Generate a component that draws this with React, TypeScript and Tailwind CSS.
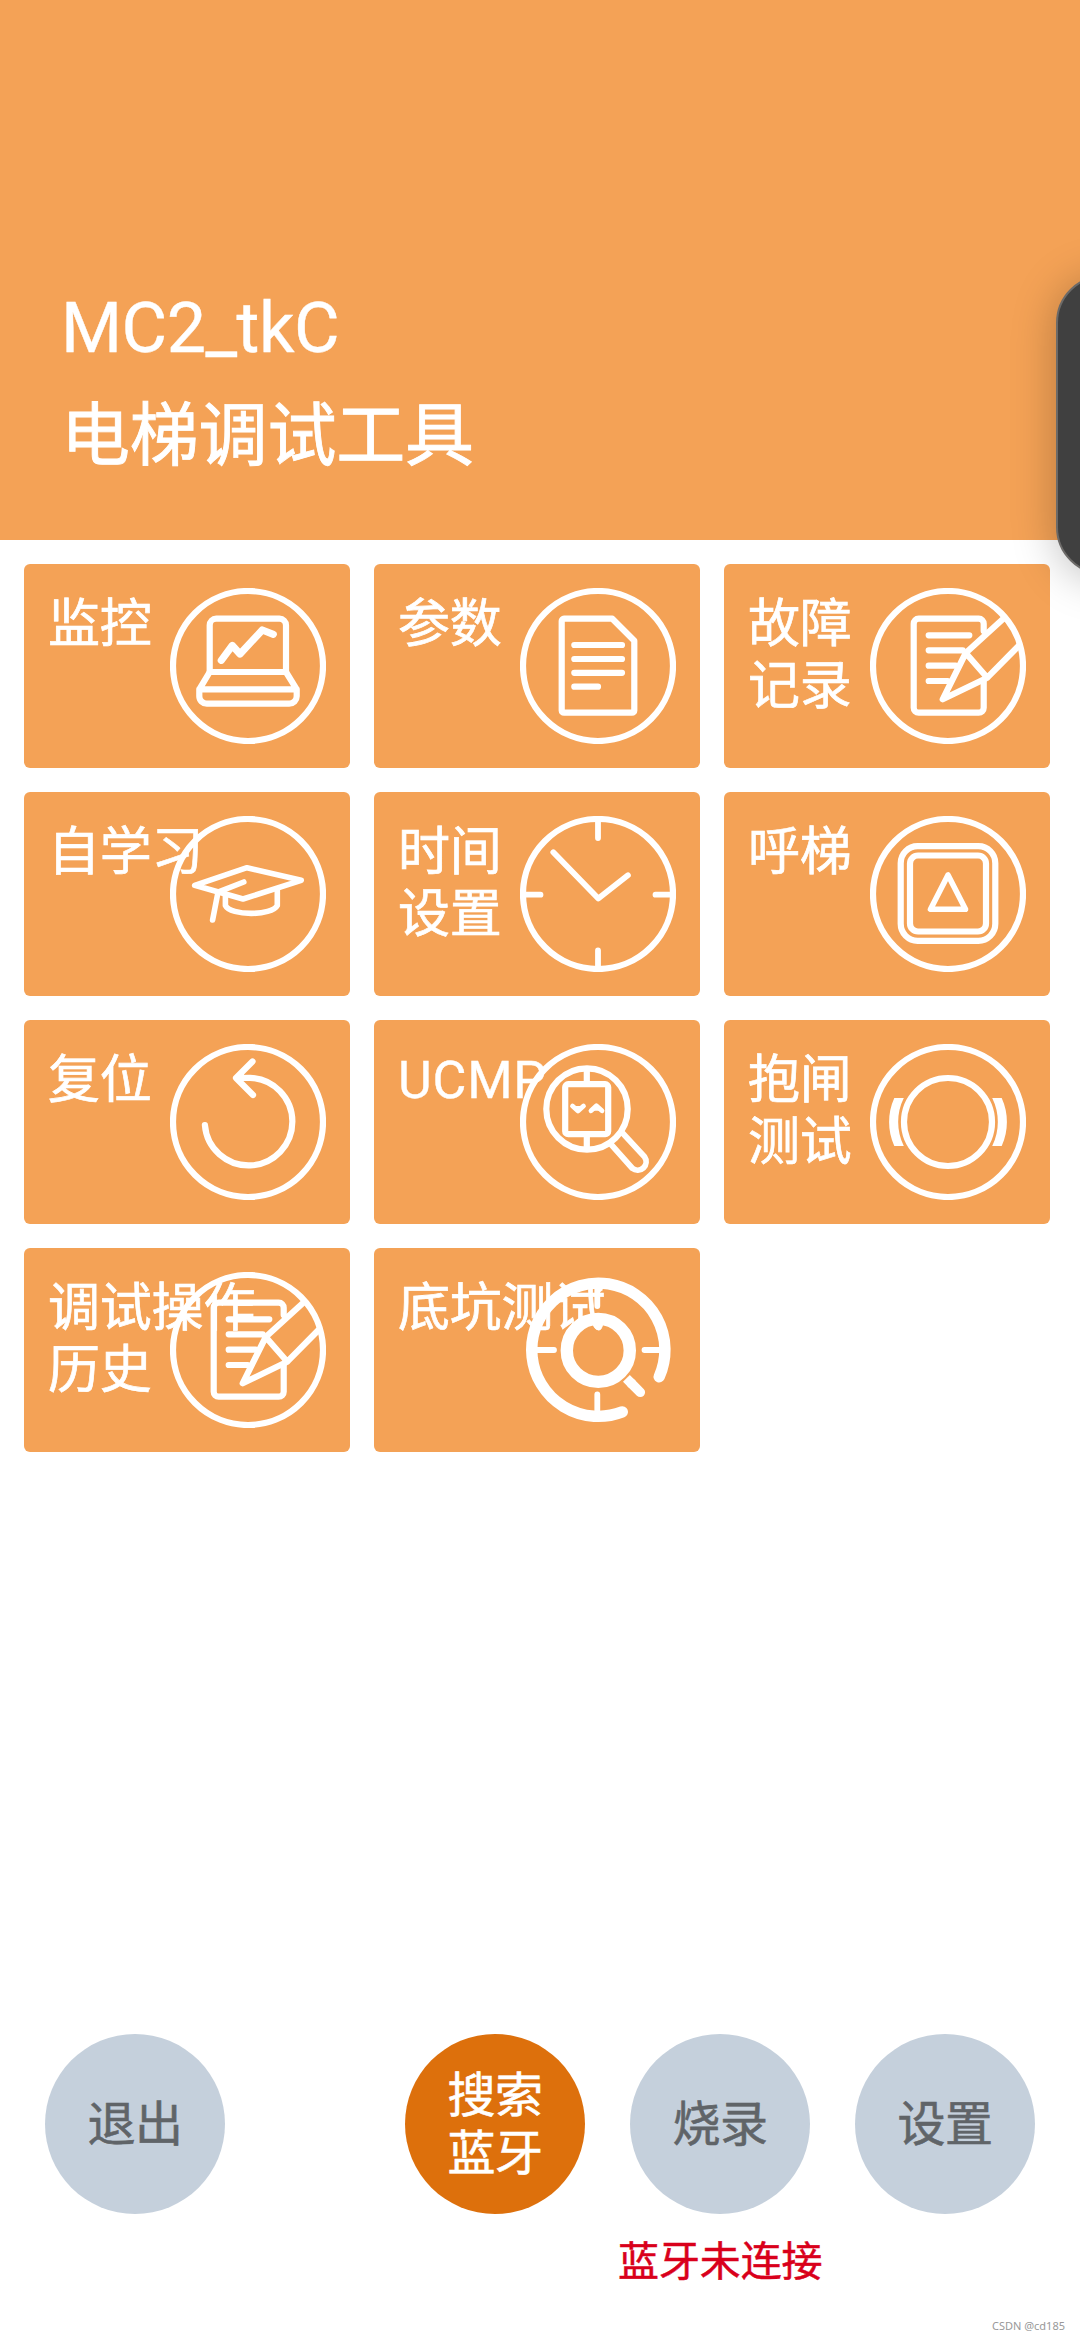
import type { ReactNode } from "react";
import { clsx } from "clsx";

interface MenuItem {
    id: string;
    lines: string[];
    icon: ReactNode;
    latin?: boolean;
}

function RoundIcon({ children }: { children: ReactNode }) {
    return (
        <>
            <circle cx="78" cy="78" r="75" />
            {children}
        </>
    );
}

const noteIcon = (
    <RoundIcon>
        <path d="M113.7 43V35.7a5 5 0 0 0-5-5h-60a5 5 0 0 0-5 5v84a5 5 0 0 0 5 5h60a5 5 0 0 0 5-5V93" />
        <path d="M58.7 47.3h40.6M58.7 62.3h34M58.7 77.7h27M58.7 93h19" />
        <path d="M133 31 95.7 65 72.7 111.3 117.3 89.7 149 57.5M95.7 65l21.6 24.7" />
    </RoundIcon>
);

const menuItems: MenuItem[] = [
    {
        id: "monitor",
        lines: ["监控"],
        icon: (
            <RoundIcon>
                <path d="M39.7 84V37.2a6.5 6.5 0 0 1 6.5-6.5h63.3a6.5 6.5 0 0 1 6.5 6.5V84z" />
                <path d="M39.7 84 29.3 101.3v6.9a7.5 7.5 0 0 0 7.5 7.5h82.4a7.5 7.5 0 0 0 7.5-7.5v-6.9L116 84M29.3 101.3h97.4" />
                <path strokeWidth="7.2" d="M51.3 72.3 62.3 57.5 70 66 92.3 42l11 4.3" />
            </RoundIcon>
        ),
    },
    {
        id: "params",
        lines: ["参数"],
        icon: (
            <RoundIcon>
                <path d="M44 30.7h48.3l22 22V122.4a2.3 2.3 0 0 1-2.3 2.3H44a2.3 2.3 0 0 1-2.3-2.3V33a2.3 2.3 0 0 1 2.3-2.3z" />
                <path d="M54.3 57H102M54.3 71H102M54.3 84.8H102M54.3 98.7H78" />
            </RoundIcon>
        ),
    },
    { id: "faults", lines: ["故障", "记录"], icon: noteIcon },
    {
        id: "learning",
        lines: ["自学习"],
        icon: (
            <RoundIcon>
                <path strokeWidth="5.6" d="m77 51.7 54.2 12.6L73 83 24.7 69.3z" />
                <path strokeWidth="5.6" d="M73.8 66 48 76.2 42.6 104" />
                <path strokeWidth="5.6" d="M55.4 78v11.5c5 10.5 46.5 10.5 51.9 0V74" />
            </RoundIcon>
        ),
    },
    {
        id: "clock",
        lines: ["时间", "设置"],
        icon: (
            <RoundIcon>
                <path strokeWidth="5.8" d="M78 3v19M78 153v-18.5M3 78.7h17.5M153 78.7h-17.5" />
                <path strokeWidth="5.8" d="m33.3 36.3 45 46.2 29.6-23.2" />
            </RoundIcon>
        ),
    },
    {
        id: "call",
        lines: ["呼梯"],
        icon: (
            <RoundIcon>
                <rect x="30.7" y="30.2" width="94.6" height="94.6" rx="17" />
                <rect x="40" y="39.5" width="76" height="76" rx="8" />
                <path strokeWidth="5.6" d="M78 59 60.5 93.3h35z" />
            </RoundIcon>
        ),
    },
    {
        id: "reset",
        lines: ["复位"],
        icon: (
            <RoundIcon>
                <path d="M34.9 81A43.8 43.8 0 1 0 80 33.8L66.5 34M82.5 17.5 66 34l17 17" />
            </RoundIcon>
        ),
    },
    {
        id: "ucmp",
        lines: ["UCMP"],
        latin: true,
        icon: (
            <RoundIcon>
                <circle cx="67" cy="65" r="40.7" />
                <rect x="45.2" y="40.2" width="43" height="50" rx="3" />
                <path d="M66.8 26v12M66.8 93v11" />
                <path fill="currentColor" strokeWidth="4.8" d="m52.5 62 5.5 5 5.5-5M71 66.8l5.4-5 5.6 5" />
                <path strokeWidth="5.8" d="m103 89.5 21.5 23.2a8.5 8.5 0 0 1-12.2 11.6L91.6 101" />
            </RoundIcon>
        ),
    },
    {
        id: "brake",
        lines: ["抱闸", "测试"],
        icon: (
            <RoundIcon>
                <circle cx="78" cy="78" r="44" />
                <g fill="currentColor" stroke="none">
                    <path d="M24.3 54h9.5a54 54 0 0 0 0 48h-9.5a58 58 0 0 1 0-48z" />
                    <path d="M131.7 54h-9.5a54 54 0 0 1 0 48h9.5a58 58 0 0 0 0-48z" />
                </g>
            </RoundIcon>
        ),
    },
    { id: "history", lines: ["调试操作", "历史"], icon: noteIcon },
    {
        id: "pit",
        lines: ["底坑测试"],
        icon: (
            <>
                <path strokeWidth="11.4" d="M102.3 139.9A66.6 66.6 0 1 1 139.2 104.8" />
                <path strokeWidth="5.8" d="M12 78h22M124.5 78h22M77.3 122.5v20M77.3 14v20" />
                <circle cx="78.3" cy="78.4" r="31.5" strokeWidth="12.4" />
                <path strokeWidth="9.6" d="m111 111 9.3 9.3" />
                <path strokeWidth="9.6" strokeLinecap="butt" d="m106.4 106.4 6 6" />
            </>
        ),
    },
];

function MenuCard({ item }: { item: MenuItem }) {
    return (
        <button className="relative flex h-[204px] items-start rounded-md bg-[#f4a256] pl-6 pt-[25px] text-left text-white">
            <span
                className={clsx(
                    "whitespace-nowrap text-[52px] leading-[62px]",
                    item.latin
                        ? "pt-[5px] font-[Roboto] tracking-[0.8px] [-webkit-text-stroke:0.4px_currentColor]"
                        : "tracking-[-0.2px] [-webkit-text-stroke:0.7px_currentColor]"
                )}
            >
                {item.lines.map((line) => (
                    <span key={line} className="block">{line}</span>
                ))}
            </span>
            <svg
                viewBox="0 0 156 156"
                className="absolute right-6 top-6 size-[156px]"
                fill="none"
                stroke="currentColor"
                strokeWidth="6.2"
                strokeLinecap="round"
                strokeLinejoin="round"
            >
                {item.icon}
            </svg>
        </button>
    );
}

function ActionButton({ lines, active, className }: { lines: string[]; active?: boolean; className?: string }) {
    return (
        <button
            className={clsx(
                "flex size-[180px] flex-col items-center justify-center rounded-full pb-2 text-[48px] leading-[58px] tracking-[-0.5px] [-webkit-text-stroke:0.6px_currentColor]",
                active ? "bg-[#dd700c] text-white" : "bg-[#c5d0dc] text-[#606468]",
                className
            )}
        >
            {lines.map((line) => (
                <span key={line}>{line}</span>
            ))}
        </button>
    );
}

export default function App() {
    return (
        <div className="relative flex h-[2340px] w-[1080px] flex-col overflow-hidden bg-white font-['Noto_Sans_CJK_SC',sans-serif]">
            {/* Header */}
            <header className="flex h-[540px] flex-col justify-end bg-[#f4a256] pb-[57px] pl-[61px] text-white">
                <h1 className="font-[Roboto] text-[70px] leading-[98px] tracking-[-0.5px] [-webkit-text-stroke:0.4px_currentColor]">MC2_tkC</h1>
                <h2 className="text-[69px] leading-[106px] tracking-[-0.2px] [-webkit-text-stroke:0.9px_currentColor]">电梯调试工具</h2>
            </header>

            {/* Menu */}
            <main className="grid w-[1074px] grid-cols-3 gap-6 p-6">
                {menuItems.map((item) => (
                    <MenuCard key={item.id} item={item} />
                ))}
            </main>

            {/* Bottom actions */}
            <footer className="mt-auto h-[306px]">
                <div className="flex gap-[45px] px-[45px]">
                    <ActionButton lines={["退出"]} className="mr-auto" />
                    <ActionButton lines={["搜索", "蓝牙"]} active />
                    <ActionButton lines={["烧录"]} />
                    <ActionButton lines={["设置"]} />
                </div>
                <p className="mt-3.5 pl-[618px] text-[41px] leading-[60px] tracking-[-0.1px] text-[#d9001b] [-webkit-text-stroke:0.5px_currentColor]">蓝牙未连接</p>
                <p className="mt-[30px] pr-[15px] text-right font-['Noto_Sans'] text-[11px] leading-4 text-[#999]">CSDN @cd185</p>
            </footer>

            {/* Edge panel handle */}
            <div className="absolute left-[1056px] top-[275px] h-[300px] w-[120px] rounded-[48px] border-2 border-[#6c6a68] bg-[#404040] shadow-[0_4px_44px_rgba(0,0,0,0.25)]" />
        </div>
    );
}
